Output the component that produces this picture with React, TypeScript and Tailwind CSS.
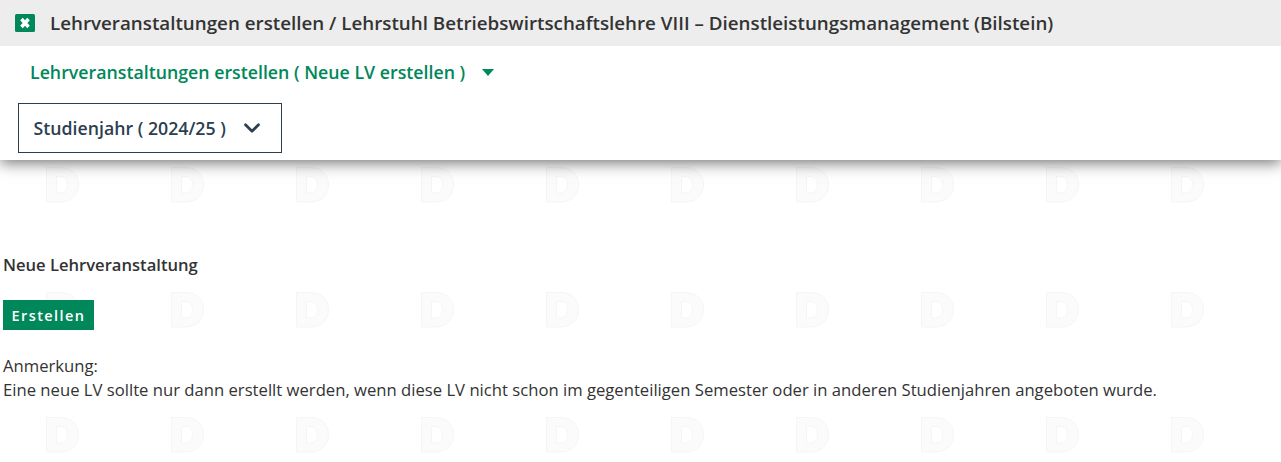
import { ChevronDown } from "lucide-react";

const Watermark = () => (
    <svg className="absolute inset-0 w-full h-full" aria-hidden="true">
        <defs>
            <pattern id="wm" x="46" y="42" width="125" height="125" patternUnits="userSpaceOnUse">
                <path
                    fillRule="evenodd"
                    d="M0.5 0.5H14C26 0.5 32.500 7.500 32.500 17.500C32.500 27.500 26 35 14 35H0.5ZM10.500 9.500V26H14C19 26 21.500 22.500 21.500 17.500C21.500 13 19 9.500 14 9.500Z"
                    fill="#fbfbfb"
                    stroke="#f5f5f5"
                />
            </pattern>
        </defs>
        <rect width="100%" height="100%" fill="url(#wm)" />
    </svg>
);

const ExcelIcon = () => (
    <svg width="20" height="18" viewBox="0 0 20 18" className="shrink-0">
        <rect width="20" height="18" rx="1.500" fill="#00875a" />
        <path d="M6.500 5L13.500 13M13.500 5L6.500 13" stroke="#fff" strokeWidth="3.500" />
    </svg>
);

export default function App() {
    return (
        <div className="relative w-full h-[462px] overflow-hidden bg-white font-['Open_Sans',sans-serif] text-[#333]">
            <Watermark />

            <div className="relative bg-white h-[160px] shadow-[0_3px_14px_rgba(0,0,0,0.55)]">
                <div className="flex items-center h-[46px] bg-[#ededed] pl-[15px]">
                    <ExcelIcon />
                    <h1 className="ml-[15px] text-[18.770px] font-semibold text-[#333] whitespace-nowrap">
                        Lehrveranstaltungen erstellen / Lehrstuhl Betriebswirtschaftslehre VIII – Dienstleistungsmanagement (Bilstein)
                    </h1>
                </div>
                <div className="flex items-center h-[52px] pl-[30px] text-[#00875a] text-[17.750px] font-semibold">
                    <span>Lehrveranstaltungen erstellen ( Neue LV erstellen )</span>
                    <span className="ml-[17px] mt-px w-0 h-0 border-x-[6.500px] border-x-transparent border-t-[7px] border-t-[#00875a]" />
                </div>
                <div className="ml-[18px] mt-[5px] flex items-center w-[264px] h-[50px] border border-[#2c3e50] pl-[14.500px] text-[#2c3e50] text-[17.730px] font-semibold">
                    <span>Studienjahr ( 2024/25 )</span>
                    <ChevronDown className="ml-[13.500px] w-[26px] h-[26px]" strokeWidth={2.500} />
                </div>
            </div>

            <div className="relative pl-[3px] pt-[93px]">
                <h2 className="text-[16.600px] leading-6 font-semibold text-[#333]">Neue Lehrveranstaltung</h2>
                <button
                    type="button"
                    className="block mt-[23px] w-[91px] h-[30px] pt-px bg-[#00875a] text-white text-[14.500px] font-semibold tracking-[1.400px]"
                >
                    Erstellen
                </button>
                <p className="mt-[24px] text-[16.660px] leading-6 text-[#333]">
                    Anmerkung:
                    <br />
                    Eine neue LV sollte nur dann erstellt werden, wenn diese LV nicht schon im gegenteiligen Semester oder in anderen Studienjahren angeboten wurde.
                </p>
            </div>
        </div>
    );
}
